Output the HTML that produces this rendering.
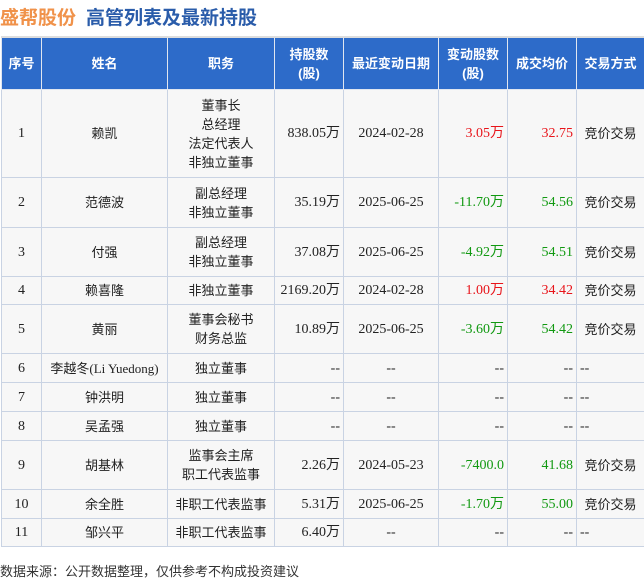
<!DOCTYPE html><html><head><meta charset="utf-8"><style>
body{margin:0;width:644px;height:579px;background:#fff;font-family:"Liberation Sans","Noto Sans CJK SC",sans-serif;position:relative;overflow:hidden}
.t{position:absolute;left:0;top:3px;font-size:19px;font-weight:bold;white-space:nowrap}
.t .a{color:#f0924a}.t .b{color:#2a5caa;margin-left:10px}
table{position:absolute;left:1px;top:36px;border-collapse:collapse;table-layout:fixed;width:643px}
td,th{border:1px solid #c9d3e3;font-size:13px;color:#222;text-align:center;padding:0 3px;line-height:19px}
th{background:#2d6bc9;color:#fff;font-weight:bold;border-color:#e0e6f0;height:51px}
tr{background:#f7f7f7}
.n{font-family:"Liberation Serif","Noto Sans CJK SC",serif;font-size:14px}
.r{text-align:right}
.red{color:#e8141a}.grn{color:#119911}
.f{position:absolute;left:0;top:561px;font-size:13px;color:#333}
</style></head><body>
<div class="t"><span class="a">盛帮股份</span><span class="b">高管列表及最新持股</span></div>
<table>
<colgroup><col style="width:40px"><col style="width:126px"><col style="width:107px"><col style="width:69px"><col style="width:95px"><col style="width:69px"><col style="width:69px"><col style="width:68px"></colgroup>
<tr style="border-top:2px solid #ddd"><th>序号</th><th>姓名</th><th>职务</th><th>持股数<br>(股)</th><th>最近变动日期</th><th>变动股数<br>(股)</th><th>成交均价</th><th>交易方式</th></tr>
<tr style="height:88px"><td class="n">1</td><td>赖凯</td><td>董事长<br>总经理<br>法定代表人<br>非独立董事</td><td class="n r">838.05万</td><td class="n">2024-02-28</td><td class="n r red">3.05万</td><td class="n r red">32.75</td><td>竞价交易</td></tr>
<tr style="height:50px"><td class="n">2</td><td>范德波</td><td>副总经理<br>非独立董事</td><td class="n r">35.19万</td><td class="n">2025-06-25</td><td class="n r grn">-11.70万</td><td class="n r grn">54.56</td><td>竞价交易</td></tr>
<tr style="height:49px"><td class="n">3</td><td>付强</td><td>副总经理<br>非独立董事</td><td class="n r">37.08万</td><td class="n">2025-06-25</td><td class="n r grn">-4.92万</td><td class="n r grn">54.51</td><td>竞价交易</td></tr>
<tr style="height:28px"><td class="n">4</td><td>赖喜隆</td><td>非独立董事</td><td class="n r">2169.20万</td><td class="n">2024-02-28</td><td class="n r red">1.00万</td><td class="n r red">34.42</td><td>竞价交易</td></tr>
<tr style="height:49px"><td class="n">5</td><td>黄丽</td><td>董事会秘书<br>财务总监</td><td class="n r">10.89万</td><td class="n">2025-06-25</td><td class="n r grn">-3.60万</td><td class="n r grn">54.42</td><td>竞价交易</td></tr>
<tr style="height:29px"><td class="n">6</td><td class="n" style="font-size:13px">李越冬(Li Yuedong)</td><td>独立董事</td><td class="n r">--</td><td class="n">--</td><td class="n r">--</td><td class="n r">--</td><td class="n" style="text-align:left">--</td></tr>
<tr style="height:29px"><td class="n">7</td><td>钟洪明</td><td>独立董事</td><td class="n r">--</td><td class="n">--</td><td class="n r">--</td><td class="n r">--</td><td class="n" style="text-align:left">--</td></tr>
<tr style="height:29px"><td class="n">8</td><td>吴孟强</td><td>独立董事</td><td class="n r">--</td><td class="n">--</td><td class="n r">--</td><td class="n r">--</td><td class="n" style="text-align:left">--</td></tr>
<tr style="height:49px"><td class="n">9</td><td>胡基林</td><td>监事会主席<br>职工代表监事</td><td class="n r">2.26万</td><td class="n">2024-05-23</td><td class="n r grn">-7400.0</td><td class="n r grn">41.68</td><td>竞价交易</td></tr>
<tr style="height:29px"><td class="n">10</td><td>余全胜</td><td>非职工代表监事</td><td class="n r">5.31万</td><td class="n">2025-06-25</td><td class="n r grn">-1.70万</td><td class="n r grn">55.00</td><td>竞价交易</td></tr>
<tr style="height:28px"><td class="n">11</td><td>邹兴平</td><td>非职工代表监事</td><td class="n r">6.40万</td><td class="n">--</td><td class="n r">--</td><td class="n r">--</td><td class="n" style="text-align:left">--</td></tr>
</table>
<div class="f">数据来源：公开数据整理，仅供参考不构成投资建议</div>
</body></html>
